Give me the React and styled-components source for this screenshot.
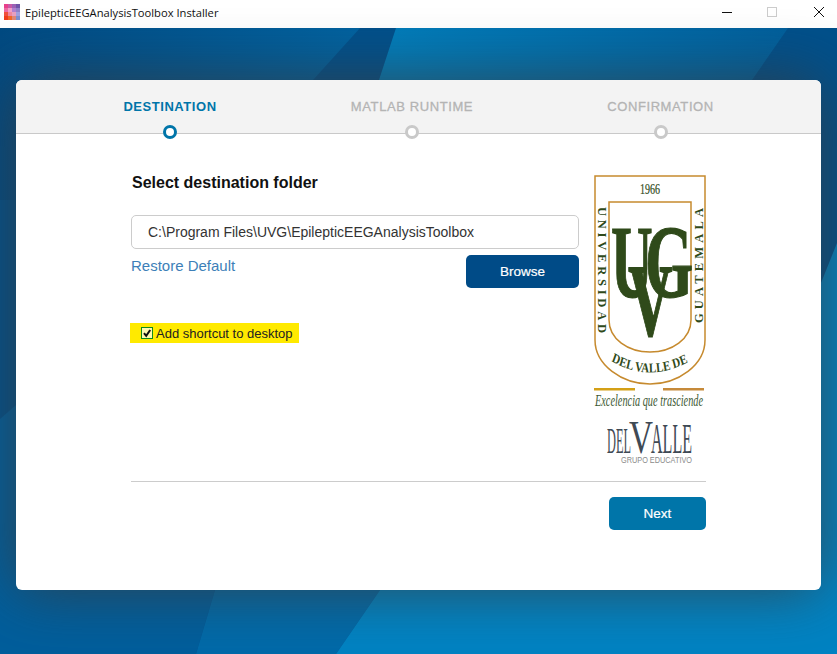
import React from 'react'
import styled, { createGlobalStyle } from 'styled-components'

const GlobalStyle = createGlobalStyle`
  html, body {
    margin: 0;
    padding: 0;
    background: #fff;
  }
  body {
    font-family: "Liberation Sans", Arial, sans-serif;
  }
`

const Window = styled.div`
  width: 837px;
  height: 654px;
  display: flex;
  flex-direction: column;
  overflow: hidden;
`

const TitleBar = styled.div`
  height: 28px;
  box-sizing: border-box;
  flex: none;
  display: flex;
  align-items: center;
  padding: 0 0 4px 4px;
  background: #fff;
`

const AppIcon = styled.svg`
  width: 16px;
  height: 16px;
  flex: none;
  margin-right: 5px;
`

const AppTitle = styled.span`
  flex: 1;
  font-family: "Open Sans", sans-serif;
  font-size: 11.2px;
  color: #111;
  white-space: nowrap;
`

const WinButton = styled.svg`
  width: 46px;
  height: 28px;
  flex: none;
  align-self: flex-start;
`

const Desktop = styled.div`
  position: relative;
  flex: 1;
  padding: 52px 16px 63px;
  border-bottom: 1px solid #0c4c46;
`

const Backdrop = styled.svg`
  position: absolute;
  left: 0;
  top: 0;
  width: 837px;
  height: 626px;
`

const Card = styled.div`
  position: relative;
  height: 510px;
  background: #fff;
  border-radius: 6px;
  box-shadow: 0 0 60px rgba(59, 59, 59, 0.78);
`

const Stepper = styled.div`
  height: 54px;
  box-sizing: border-box;
  display: grid;
  grid-template-columns: 308px 176px 321px;
  align-items: start;
  padding-top: 19px;
  background: #f3f3f3;
  border-bottom: 1px solid #c9c9c9;
  border-radius: 6px 6px 0 0;
`

const Step = styled.div`
  display: flex;
  flex-direction: column;
  align-items: center;
  gap: 11px;
`

const StepLabel = styled.span`
  font-size: 13px;
  line-height: 15px;
  font-weight: ${(p) => (p.$active ? 'bold' : 'normal')};
  letter-spacing: ${(p) => (p.$active ? '0.55px' : '0.6px')};
  color: ${(p) => (p.$active ? '#0075a9' : '#b4b4b4')};
  -webkit-text-stroke: ${(p) => (p.$active ? '0' : '0.3px #b4b4b4')};
`

const StepDot = styled.span`
  width: 14px;
  height: 14px;
  box-sizing: border-box;
  border-radius: 50%;
  background: #fff;
  border: 3px solid ${(p) => (p.$active ? '#0075a9' : '#c9c9c9')};
`

const Body = styled.div`
  padding: 39px 115px 0;
`

const Columns = styled.div`
  display: flex;
  gap: 15px;
`

const FormColumn = styled.div`
  width: 448px;
  flex: none;
`

const Heading = styled.h2`
  margin: 0 0 22px 1px;
  font-size: 16px;
  line-height: 20px;
  font-weight: bold;
  color: #111;
`

const PathInput = styled.input`
  display: block;
  width: 100%;
  height: 34px;
  box-sizing: border-box;
  padding: 0 16px;
  border: 1px solid #ccc;
  border-radius: 5px;
  background: #fff;
  font-family: inherit;
  font-size: 14px;
  color: #333;
  outline: none;
`

const PathActions = styled.div`
  display: flex;
  justify-content: space-between;
  align-items: flex-start;
  margin-top: 6px;
`

const RestoreLink = styled.a`
  margin-top: 1px;
  font-size: 15px;
  line-height: 20px;
  color: #3d7fb8;
`

const Button = styled.button`
  width: ${(p) => p.$width}px;
  height: 33px;
  padding: 0;
  border: 0;
  border-radius: 5px;
  background: ${(p) => p.$color};
  font-family: inherit;
  font-size: 13.5px;
  color: #fff;
  -webkit-text-stroke: 0.2px #fff;
`

const ShortcutLabel = styled.label`
  display: flex;
  align-items: center;
  width: 169px;
  height: 20px;
  margin: 35px 0 0 -1px;
  padding-left: 11px;
  box-sizing: border-box;
  background: #ffea00;
  font-size: 13px;
  color: #222;
  white-space: nowrap;
`

const CheckBox = styled.span`
  width: 12px;
  height: 12px;
  margin-right: 3px;
  flex: none;
  box-sizing: border-box;
  display: flex;
  border: 1px solid #0f8a1c;
  background: #fff8b0;
`

const Logo = styled.svg`
  width: 112px;
  height: 290px;
  flex: none;
  margin-top: 2px;
  display: block;
`

const Divider = styled.hr`
  margin: 16px 0 15px;
  border: 0;
  border-top: 1px solid #ccc;
`

const Footer = styled.div`
  display: flex;
  justify-content: flex-end;
`

const GREEN = '#2f4a1a'
const GOLD = '#c68a2e'
const SERIF = '"Liberation Serif", serif'

const LogoMark = () => (
  <Logo viewBox="0 0 112 290">
    <path d="M1 1 H111 V165 C111 190 84 209 56 209 C28 209 1 190 1 165 Z" fill="#fff" stroke={GOLD} strokeWidth="1.5" />
    <path d="M15 27 H97 V145 C97 164 78 177 56 177 C34 177 15 164 15 145 Z" fill="#fff" stroke={GOLD} strokeWidth="1.5" />
    <text x="46" y="19" fontFamily={SERIF} fontSize="15" fill={GREEN} stroke={GREEN} strokeWidth="0.2" textLength="20" lengthAdjust="spacingAndGlyphs">1966</text>
    <text transform="translate(3.5 32) rotate(90)" fontFamily={SERIF} fontWeight="bold" fontSize="12.5" fill={GREEN} textLength="126" lengthAdjust="spacing">UNIVERSIDAD</text>
    <text transform="translate(108.5 148) rotate(-90)" fontFamily={SERIF} fontWeight="bold" fontSize="12.5" fill={GREEN} textLength="115" lengthAdjust="spacing">GUATEMALA</text>
    <g fontFamily={SERIF} fontWeight="bold" fill={GREEN} stroke={GREEN} strokeWidth="1.2">
      <text transform="translate(17 122) scale(0.56 1)" fontSize="103">U</text>
      <text transform="translate(51 122) scale(0.6 1)" fontSize="103">G</text>
      <text transform="translate(34 160) scale(0.6 1)" fontSize="103">V</text>
    </g>
    <g transform="scale(0.82 1)">
      <path id="logo-arc" d="M21 186 Q68 209 117 186" fill="none" />
      <text fontFamily={SERIF} fontWeight="bold" fontSize="13.5" fill={GREEN}>
        <textPath href="#logo-arc">DEL VALLE DE</textPath>
      </text>
    </g>
    <rect x="0" y="213" width="41" height="2.5" fill="#d4a017" />
    <rect x="69" y="213" width="41" height="2.5" fill="#c68a3a" />
    <text x="1" y="231" fontFamily={SERIF} fontStyle="italic" fontSize="17" fill="#3e5a34" textLength="108" lengthAdjust="spacingAndGlyphs">Excelencia que trasciende</text>
    <g fontFamily={SERIF} fill="#3f4a55">
      <text x="13" y="278" fontSize="35" textLength="24" lengthAdjust="spacingAndGlyphs">DEL</text>
      <text x="35" y="278" fontSize="47" textLength="24" lengthAdjust="spacingAndGlyphs">V</text>
      <text x="57" y="278" fontSize="42" textLength="41" lengthAdjust="spacingAndGlyphs">ALLE</text>
    </g>
    <text x="27" y="288" fontFamily='"Liberation Sans", sans-serif' fontSize="9.5" fill="#8a8a8a" textLength="71" lengthAdjust="spacingAndGlyphs">GRUPO EDUCATIVO</text>
  </Logo>
)

const steps = [
  { label: 'DESTINATION', active: true },
  { label: 'MATLAB RUNTIME' },
  { label: 'CONFIRMATION' },
]

const iconCells = [
  ['#e8408c', '#c85aa8', '#9a62b4', '#6f55a8'],
  ['#ec6aa4', '#f0a0c8', '#b080d0', '#9080c8'],
  ['#f0503c', '#f088a0', '#e8a0c0', '#a0a0e0'],
  ['#f03c1c', '#f06828', '#e08878', '#7c90d0'],
]

const App = () => (
  <Window>
    <GlobalStyle />
    <TitleBar>
      <AppIcon viewBox="0 0 16 16">
        {iconCells.map((row, y) =>
          row.map((fill, x) => <rect key={`${x}-${y}`} x={x * 4} y={y * 4} width="4" height="4" fill={fill} />)
        )}
      </AppIcon>
      <AppTitle>EpilepticEEGAnalysisToolbox Installer</AppTitle>
      <WinButton viewBox="0 0 46 28">
        <path d="M23 12.5 H33" stroke="#111" strokeWidth="1" />
      </WinButton>
      <WinButton viewBox="0 0 46 28">
        <rect x="22.5" y="7.5" width="9" height="9" fill="none" stroke="#ccc" />
      </WinButton>
      <WinButton viewBox="0 0 46 28">
        <path d="M23 7 L33 17 M33 7 L23 17" stroke="#111" strokeWidth="1" />
      </WinButton>
    </TitleBar>

    <Desktop>
      <Backdrop viewBox="0 28 837 626">
        <defs>
          <linearGradient id="bg-left" gradientUnits="userSpaceOnUse" x1="0" y1="0" x2="360" y2="0">
            <stop offset="0" stopColor="#004a82" />
            <stop offset="1" stopColor="#0062a0" />
          </linearGradient>
          <linearGradient id="bg-mid" gradientUnits="userSpaceOnUse" x1="396" y1="0" x2="788" y2="0">
            <stop offset="0" stopColor="#007cba" />
            <stop offset="1" stopColor="#005f9c" />
          </linearGradient>
        </defs>
        <rect x="0" y="28" width="837" height="626" fill="#00508b" />
        <polygon points="0,28 360,28 313,80 200,200 0,200" fill="url(#bg-left)" />
        <polygon points="396,28 788,28 752,80 600,300 360,300 379,80" fill="url(#bg-mid)" />
        <polygon points="0,419 16,405 300,200 215,590 196,654 0,654" fill="#005e9c" />
        <polygon points="215,590 380,590 336,654 196,654" fill="#006aa9" />
        <polygon points="837,243 821,283 380,590 336,654 837,654" fill="#0083c3" />
      </Backdrop>

      <Card>
        <Stepper>
          {steps.map((step) => (
            <Step key={step.label}>
              <StepLabel $active={step.active}>{step.label}</StepLabel>
              <StepDot $active={step.active} />
            </Step>
          ))}
        </Stepper>

        <Body>
          <Columns>
            <FormColumn>
              <Heading>Select destination folder</Heading>
              <PathInput readOnly value="C:\Program Files\UVG\EpilepticEEGAnalysisToolbox" />
              <PathActions>
                <RestoreLink>Restore Default</RestoreLink>
                <Button $width={113} $color="#004b87">Browse</Button>
              </PathActions>
              <ShortcutLabel>
                <CheckBox>
                  <svg viewBox="0 0 10 10" width="10" height="10">
                    <path d="M2 5.2 L4.2 7.8 L8.2 2" fill="none" stroke="#111" strokeWidth="2" />
                  </svg>
                </CheckBox>
                Add shortcut to desktop
              </ShortcutLabel>
            </FormColumn>
            <LogoMark />
          </Columns>
          <Divider />
          <Footer>
            <Button $width={97} $color="#0075a9">Next</Button>
          </Footer>
        </Body>
      </Card>
    </Desktop>
  </Window>
)

export default App
